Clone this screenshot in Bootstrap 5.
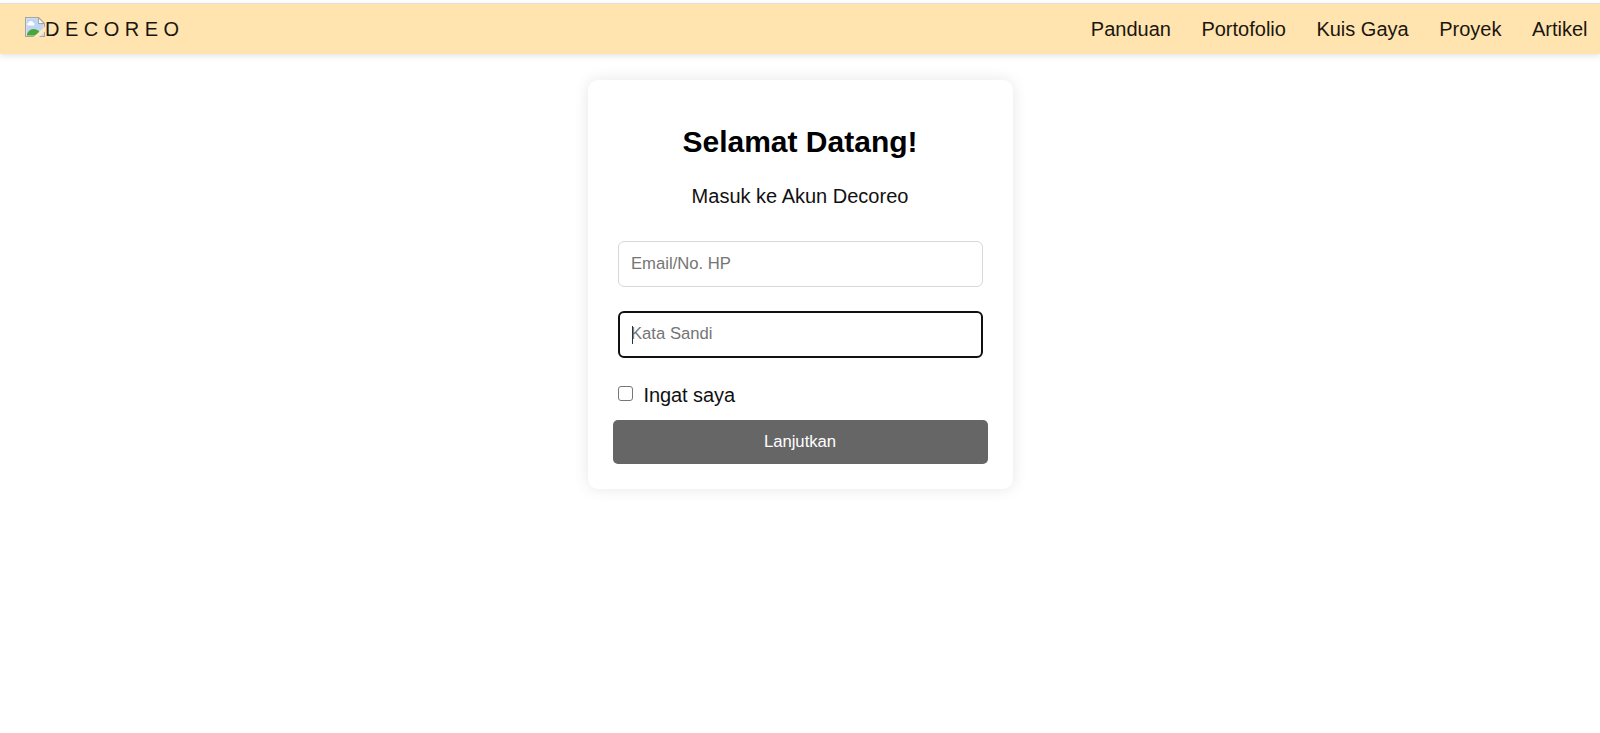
<!DOCTYPE html>
<html lang="id">
<head>
<meta charset="utf-8">
<title>Decoreo - Masuk</title>
<meta name="viewport" content="width=device-width, initial-scale=1">
<link href="https://cdn.jsdelivr.net/npm/bootstrap@5.3.0/dist/css/bootstrap.min.css" rel="stylesheet">
<style>
body{font-family:"Liberation Sans",Arial,sans-serif;font-size:20px;line-height:23px;color:#111;background:#fff}
.site-nav{height:50.5px;border-top:1px solid #e3e1dc;background:#ffe4b0;box-shadow:0 2px 6px rgba(0,0,0,.11);padding:1.5px 12.5px 0 25px}
.site-nav .navbar-brand{font-size:20px;line-height:23px;letter-spacing:5.5px;color:#1a160f}
.site-nav .navbar-brand svg{margin-bottom:5px}
.site-nav .nav-link{color:#1a160f;font-size:20px;line-height:23px}
.page-top{padding-top:3px}
.menu{gap:30.5px}
.login-area{padding:26.5px 0 40px}
.login-card{width:425px;height:409px;padding:0 25px 25px;border:0;border-radius:10px;background:#fff;box-shadow:0 0 15px rgba(0,0,0,.1)}
.login-card h1{font-size:30px;line-height:34px;margin:45px 0 0;color:#000}
.intro{margin:26px 0 0}
.fields{margin:33px 4.5px 0 5.5px}
.fields .form-control{height:46px;padding:0 12px;border:1px solid #d8d8d8;border-radius:6px;font-size:16.67px;color:#222}
.fields .form-control::placeholder{color:#757575;opacity:1}
.fields .field-active{margin-top:24px;height:46.5px;border:2px solid #101010;padding:0 11px;box-shadow:none}
.caret{left:13.5px;top:15px;width:1px;height:18px;background:#333}
.remember{margin-top:26.5px;gap:10.5px;line-height:23px}
.remember .form-check-input{width:15px;height:15px;margin:0 0 4px;border:1.25px solid #767676;border-radius:3px}
.remember span{letter-spacing:-.08px}
.submit{height:44px;margin-top:auto;border:0;border-radius:5px;background:#666;color:#fff;font-size:16.67px;padding:0 0 2px}
</style>
<script src="https://cdn.jsdelivr.net/npm/bootstrap@5.3.0/dist/js/bootstrap.bundle.min.js"></script>
</head>
<body class="min-vh-100">
<header class="page-top">
<nav class="site-nav navbar navbar-expand flex-nowrap justify-content-between">
  <a class="navbar-brand d-flex align-items-center m-0 p-0" href="#">
    <svg width="20" height="20" viewBox="0 0 20 20" aria-hidden="true">
      <path d="M.6.6h12.8l6 6v12.8H.6z" fill="#fff" stroke="#a5a59f" stroke-width="1.2"/>
      <path d="M1.500 1.500h11.300v5.700H18.500V18.500H1.500z" fill="#bfd5f4"/>
      <path d="M3 8.500a2 2 0 0 1 .6-3.100 2.500 2.500 0 0 1 4.600.3 1.500 1.500 0 0 1 .6 2.800z" fill="#fff"/>
      <path d="M2 18.500v-1.500C4.500 11.500 9.500 10.500 14 14V18.500z" fill="#4ba638"/>
      <path d="M13.400.6v6h6z" fill="#fff" stroke="#a5a59f" stroke-width="1.1"/>
      <path d="M20 9.500V14.500L14 20H8.500z" fill="#ffe9c0"/>
    </svg><span>DECOREO</span>
  </a>
  <div class="navbar-nav menu">
    <a class="nav-link p-0" href="#">Panduan</a>
    <a class="nav-link p-0" href="#">Portofolio</a>
    <a class="nav-link p-0" href="#">Kuis Gaya</a>
    <a class="nav-link p-0" href="#">Proyek</a>
    <a class="nav-link p-0" href="#">Artikel</a>
  </div>
</nav>
</header>
<main class="login-area">
  <form class="login-card card mx-auto">
    <h1 class="fw-bold text-center">Selamat Datang!</h1>
    <p class="intro text-center">Masuk ke Akun Decoreo</p>
    <div class="fields">
      <input class="form-control" type="text" placeholder="Email/No. HP" aria-label="Email/No. HP">
      <div class="position-relative">
        <input class="form-control field-active" type="password" placeholder="Kata Sandi" aria-label="Kata Sandi">
        <span class="caret position-absolute"></span>
      </div>
      <label class="remember d-flex align-items-center">
        <input class="form-check-input" type="checkbox"><span>Ingat saya</span>
      </label>
    </div>
    <button class="submit btn w-100" type="button">Lanjutkan</button>
  </form>
</main>
</body>
</html>
